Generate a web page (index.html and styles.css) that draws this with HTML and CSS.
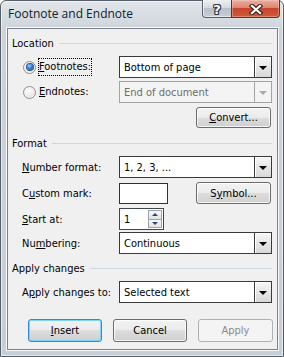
FILE: index.html
```html
<!DOCTYPE html>
<html>
<head>
<meta charset="utf-8">
<title>Footnote and Endnote</title>
<link rel="stylesheet" href="styles.css">
</head>
<body>
<div class="window">
  <div class="titlebar">
    <span class="title">Footnote and Endnote</span>
    <div class="caption-buttons">
      <div class="cap help"><span class="help-glyph">?</span></div>
      <div class="cap close">
        <svg width="14" height="11" viewBox="0 0 14 11">
          <path d="M3 2 L11 9 M11 2 L3 9" stroke="#3b2a26" stroke-width="4.4" stroke-linecap="square" fill="none"/>
          <path d="M3 2 L11 9 M11 2 L3 9" stroke="#ffffff" stroke-width="2.2" stroke-linecap="square" fill="none"/>
        </svg>
      </div>
    </div>
  </div>
  <div class="client">
    <div class="group-header g-location"><span>Location</span><i class="rule"></i></div>

    <div class="row r-foot">
      <div class="cell-label radio-cell"><span class="radio checked"></span><span class="focus"><u>F</u>ootnotes:</span></div>
      <div class="combo"><span class="val">Bottom of page</span><span class="drop"><i class="tri"></i></span></div>
    </div>

    <div class="row r-end">
      <div class="cell-label radio-cell"><span class="radio"></span><span class="nofocus"><u>E</u>ndnotes:</span></div>
      <div class="combo disabled"><span class="val">End of document</span><span class="drop"><i class="tri"></i></span></div>
    </div>

    <div class="row r-convert">
      <button class="btn side"><u>C</u>onvert...</button>
    </div>

    <div class="group-header g-format"><span>Format</span><i class="rule"></i></div>

    <div class="row r-numfmt">
      <div class="cell-label"><u>N</u>umber format:</div>
      <div class="combo"><span class="val">1, 2, 3, ...</span><span class="drop"><i class="tri"></i></span></div>
    </div>

    <div class="row r-custom">
      <div class="cell-label">C<u>u</u>stom mark:</div>
      <div class="textbox"></div>
      <button class="btn side">S<u>y</u>mbol...</button>
    </div>

    <div class="row r-start">
      <div class="cell-label"><u>S</u>tart at:</div>
      <div class="spin">
        <span class="val">1</span>
        <span class="spin-btns">
          <span class="sb up"><i class="stri up"></i></span>
          <span class="sb down"><i class="stri down"></i></span>
        </span>
      </div>
    </div>

    <div class="row r-numbering">
      <div class="cell-label">Nu<u>m</u>bering:</div>
      <div class="combo"><span class="val">Continuous</span><span class="drop"><i class="tri"></i></span></div>
    </div>

    <div class="group-header g-apply"><span>Apply changes</span><i class="rule"></i></div>

    <div class="row r-applyto">
      <div class="cell-label">A<u>p</u>ply changes to:</div>
      <div class="combo"><span class="val">Selected text</span><span class="drop"><i class="tri"></i></span></div>
    </div>

    <div class="row r-buttons">
      <button class="btn default"><u>I</u>nsert</button>
      <button class="btn">Cancel</button>
      <button class="btn disabled">Apply</button>
    </div>
  </div>
</div>
</body>
</html>
```

FILE: styles.css
```css
html, body {
  margin: 0;
  padding: 0;
  background: #ffffff;
}

body {
  font-family: "DejaVu Sans Condensed", "Liberation Sans", sans-serif;
  font-size: 11px;
  color: #000;
}

.window {
  width: 284px;
  height: 357px;
  box-sizing: border-box;
  border: 1px solid #56606b;
  border-radius: 6px 6px 0 0;
  background: linear-gradient(to bottom, #e2e6ea 0px, #cdd3d9 30px, #c8ced5 100%);
  box-shadow: inset 0 0 0 1px rgba(255, 255, 255, 0.55);
  display: flex;
  flex-direction: column;
}

/* ---------- title bar ---------- */
.titlebar {
  height: 27px;
  display: flex;
  align-items: flex-start;
  flex: none;
}

.title {
  font-family: "Open Sans", "Noto Sans", sans-serif;
  font-size: 12px;
  line-height: 16px;
  color: #14202c;
  margin: 5px 0 0 7px;
  white-space: nowrap;
}

.caption-buttons {
  margin-left: auto;
  margin-right: 3px;
  margin-top: -1px;
  display: flex;
  height: 18px;
}

.cap {
  box-sizing: border-box;
  height: 18px;
  display: flex;
  align-items: center;
  justify-content: center;
  border: 1px solid #58626c;
  border-top: none;
}

.help {
  width: 29px;
  border-right: none;
  border-radius: 0 0 0 4px;
  background: linear-gradient(to bottom, #eef0f2 0%, #d6dadf 45%, #b9c0c7 50%, #c8ced4 100%);
  box-shadow: inset 1px 0 0 rgba(255,255,255,.6), inset 0 -1px 0 rgba(255,255,255,.5);
}

.help-glyph {
  font-family: "DejaVu Sans", sans-serif;
  font-weight: bold;
  font-size: 13px;
  line-height: 13px;
  color: #ffffff;
  text-shadow: -1px 0 0 #2e3a46, 1px 0 0 #2e3a46, 0 -1px 0 #2e3a46, 0 1px 0 #2e3a46,
               -1px -1px 0 #2e3a46, 1px 1px 0 #2e3a46, -1px 1px 0 #2e3a46, 1px -1px 0 #2e3a46;
  margin-top: 1px;
}

.close {
  width: 49px;
  border-color: #6a2f24;
  border-radius: 0 0 4px 0;
  background: linear-gradient(to bottom, #eab0a2 0%, #dd8670 45%, #c8452b 50%, #cf5a3a 100%);
  box-shadow: inset 0 0 0 1px rgba(255,220,210,.35);
}

.close svg {
  display: block;
  margin-top: 1px;
}

/* ---------- client area ---------- */
.client {
  margin: 0 5px 0 6px;
  height: 322px;
  box-sizing: border-box;
  border: 1px solid #77828d;
  box-shadow: 0 0 0 1px rgba(255, 255, 255, 0.85);
  background: #f0f0f0;
  padding: 0 5px 0 4px;
  display: flex;
  flex-direction: column;
  flex: none;
}

.group-header {
  height: 14px;
  display: flex;
  align-items: center;
  white-space: nowrap;
  flex: none;
}

.group-header .rule {
  flex: 1;
  height: 1px;
  margin-left: 5px;
  margin-top: 1px;
  background: #cbd6e0;
}

.g-location { margin-top: 7px; }
.g-format { margin-top: 8px; }
.g-apply { margin-top: 7px; }

.row {
  height: 22px;
  display: flex;
  align-items: center;
  flex: none;
}

.r-foot { margin-top: 6px; }
.r-end { margin-top: 3px; }
.r-convert { margin-top: 4px; height: 21px; justify-content: flex-end; }
.r-numfmt { margin-top: 6px; }
.r-custom { margin-top: 4px; }
.r-start { margin-top: 4px; }
.r-numbering { margin-top: 2px; }
.r-applyto { margin-top: 6px; }
.r-buttons { margin-top: 16px; height: 23px; padding-left: 16px; gap: 11px; }

.cell-label {
  width: 107px;
  box-sizing: border-box;
  padding-left: 10px;
  white-space: nowrap;
  flex: none;
}

.radio-cell {
  padding-left: 11px;
  display: flex;
  align-items: center;
}

.radio {
  width: 13px;
  height: 13px;
  box-sizing: border-box;
  border-radius: 50%;
  border: 1px solid #8d8f90;
  background: radial-gradient(circle at 40% 35%, #ffffff 0%, #f0f0f0 40%, #d3d3d3 100%);
  box-shadow: inset 0 0 0 1px #f4f4f4;
  display: flex;
  align-items: center;
  justify-content: center;
  flex: none;
}

.radio.checked::after {
  content: "";
  width: 6px;
  height: 6px;
  border-radius: 50%;
  background: radial-gradient(circle at 40% 35%, #9adcff 0%, #2b7de0 45%, #0c3f9a 100%);
  box-shadow: 0 0 0 1px #2a4f7c;
}

.focus, .nofocus {
  margin-left: 2px;
  padding: 1px 1px;
  line-height: 16px;
}

.focus {
  outline: 1px dotted #000;
  outline-offset: -1px;
}

/* ---------- combo boxes ---------- */
.combo {
  flex: 1;
  height: 22px;
  box-sizing: border-box;
  border: 1px solid #3a3a3a;
  background: #ffffff;
  display: flex;
  align-items: stretch;
}

.combo .val {
  flex: 1;
  padding-left: 4px;
  display: flex;
  align-items: center;
  white-space: nowrap;
}

.drop {
  width: 17px;
  box-sizing: border-box;
  border-left: 1px solid #3a3a3a;
  background: linear-gradient(to bottom, #f7f7f7 0%, #e6e6e6 50%, #d8d8d8 100%);
  box-shadow: inset 1px 1px 0 #ffffff;
  display: flex;
  align-items: center;
  justify-content: center;
}

.tri {
  width: 0;
  height: 0;
  border-left: 4px solid transparent;
  border-right: 4px solid transparent;
  border-top: 4px solid #000;
  margin-top: 1px;
}

.combo.disabled {
  border-color: #a3a3a3;
  background: #f4f4f4;
  color: #6d6d6d;
}

.combo.disabled .drop {
  border-left-color: #a3a3a3;
  background: #f4f4f4;
  box-shadow: none;
}

.combo.disabled .tri {
  border-top-color: #a8a8a8;
}

/* ---------- text / spin ---------- */
.textbox {
  width: 49px;
  height: 21px;
  box-sizing: border-box;
  border: 1px solid #27323c;
  background: #ffffff;
  flex: none;
}

.spin {
  width: 45px;
  height: 22px;
  box-sizing: border-box;
  border: 1px solid #3f464d;
  background: #ffffff;
  display: flex;
  align-items: stretch;
  flex: none;
}

.spin .val {
  flex: 1;
  padding-left: 4px;
  display: flex;
  align-items: center;
}

.spin-btns {
  width: 15px;
  display: flex;
  flex-direction: column;
  padding: 1px 1px 1px 0;
  box-sizing: border-box;
}

.sb {
  flex: 1;
  box-sizing: border-box;
  border: 1px solid #9aa3ab;
  background: linear-gradient(to bottom, #f8f8f8, #e2e2e2);
  display: flex;
  align-items: center;
  justify-content: center;
}

.sb.down { border-top: none; }

.stri {
  width: 0;
  height: 0;
  border-left: 3px solid transparent;
  border-right: 3px solid transparent;
}

.stri.up { border-bottom: 3px solid #1d4a86; }
.stri.down { border-top: 3px solid #1d4a86; }

/* ---------- buttons ---------- */
.btn {
  font-family: inherit;
  font-size: 11px;
  color: #000;
  width: 74px;
  height: 22px;
  padding: 0;
  box-sizing: border-box;
  border: 1px solid #6b6b6b;
  border-radius: 3px;
  background: linear-gradient(to bottom, #f3f3f3 0%, #ebebeb 50%, #dddddd 50%, #cfcfcf 100%);
  box-shadow: inset 0 0 0 1px rgba(255, 255, 255, 0.8);
  flex: none;
}

.btn.side {
  width: 75px;
  margin-left: auto;
  margin-right: 1px;
}

.r-convert .btn.side { height: 21px; }

.r-buttons .btn { height: 23px; }

.btn.default {
  border-color: #2c8bd3;
  box-shadow: inset 0 0 0 1px #7fd3f7;
}

.btn.disabled {
  width: 75px;
  border-color: #adb2b5;
  background: #f4f4f4;
  color: #8a8a8a;
  box-shadow: none;
}

u {
  text-decoration: underline;
  text-underline-offset: 1px;
}
```
